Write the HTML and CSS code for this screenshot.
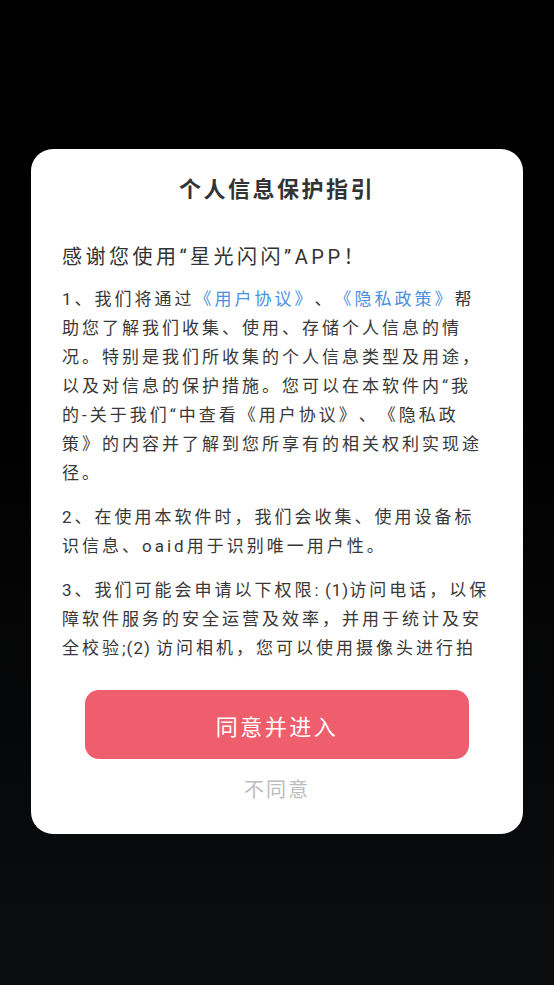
FILE: index.html
```html
<!DOCTYPE html>
<html lang="zh-CN">
<head>
<meta charset="utf-8">
<title>个人信息保护指引</title>
<link rel="stylesheet" href="styles.css">
</head>
<body>
<div class="screen">
  <div class="dialog">
    <h1 class="title">个人信息保护指引</h1>
    <p class="subtitle">感谢您使用“星光闪闪”APP！</p>
    <div class="scroll">
      <p class="para">1、我们将通过<span class="link">《用户协议》</span>、<span class="link">《隐私政策》</span>帮助您了解我们收集、使用、存储个人信息的情况。特别是我们所收集的个人信息类型及用途，以及对信息的保护措施。您可以在本软件内“我的-关于我们“中查看《用户协议》、《隐私政策》的内容并了解到您所享有的相关权利实现途径。</p>
      <p class="para">2、在使用本软件时，我们会收集、使用设备标识信息、oaid用于识别唯一用户性。</p>
      <p class="para">3、我们可能会申请以下权限<span class="latin">: (1)</span>访问电话，以保障软件服务的安全运营及效率，并用于统计及安全校验<span class="latin">;(2) </span>访问相机，您可以使用摄像头进行拍照、扫码等功能，以便于您上传头像及相关图片。</p>
    </div>
    <button class="agree">同意并进入</button>
    <div class="disagree">不同意</div>
  </div>
</div>
</body>
</html>
```
FILE: styles.css
```css
html, body {
  margin: 0;
  padding: 0;
}
body {
  width: 554px;
  height: 985px;
  background: linear-gradient(#000 0%, #000 40%, #0c0d0f 100%);
  font-family: Roboto, "Noto Sans CJK SC", sans-serif;
  text-spacing-trim: space-all;
  overflow: hidden;
}
.screen {
  padding-top: 149px;
  display: flex;
  justify-content: center;
}
.dialog {
  width: 492px;
  box-sizing: border-box;
  background: #fff;
  border-radius: 22px;
  padding: 26px 31px 29px;
  display: flex;
  flex-direction: column;
}
.title {
  margin: 0;
  text-align: center;
  font-size: 22px;
  line-height: 30px;
  font-weight: 700;
  letter-spacing: 2.5px;
  color: #333;
}
.subtitle {
  margin: 37px 0 0;
  font-size: 20px;
  line-height: 30px;
  letter-spacing: 3.5px;
  color: #333;
}
.scroll {
  margin-top: 13px;
  height: 378px;
  overflow: hidden;
}
.para {
  margin: 0 0 15px;
  font-size: 17px;
  line-height: 29px;
  letter-spacing: 3px;
  color: #383838;
  text-spacing-trim: space-all;
}
.latin {
  letter-spacing: 1px;
}
.link {
  color: #4a90e2;
}
.agree {
  align-self: center;
  margin-top: 27px;
  width: 384px;
  height: 69px;
  border: 0;
  border-radius: 14px;
  background: #ee5e6c;
  color: #fff;
  font-family: Roboto, "Noto Sans CJK SC", sans-serif;
  font-size: 22px;
  letter-spacing: 2.5px;
  padding: 0;
}
.disagree {
  margin-top: 16px;
  text-align: center;
  font-size: 20px;
  line-height: 30px;
  letter-spacing: 2px;
  color: #bdbdbd;
}
```
